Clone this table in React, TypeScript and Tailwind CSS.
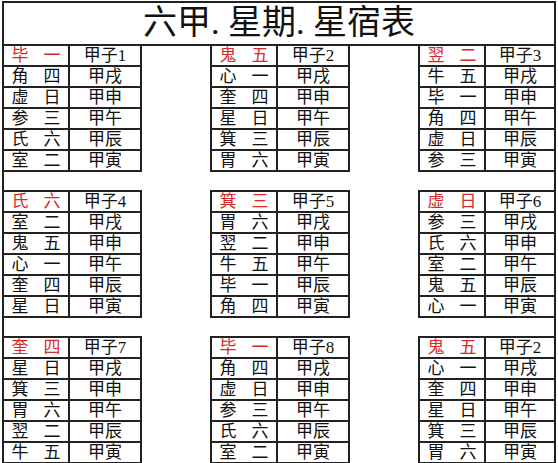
import React from "react";

type Row = [string, string, string];
type BlockData = { head: [string, string]; label: string; rows: [string, string][] };

const TAIL = ["甲戌", "甲申", "甲午", "甲辰", "甲寅"];

const blocks: BlockData[] = [
  { head: ["毕", "一"], label: "1", rows: [["角", "四"], ["虚", "日"], ["参", "三"], ["氏", "六"], ["室", "二"]] },
  { head: ["鬼", "五"], label: "2", rows: [["心", "一"], ["奎", "四"], ["星", "日"], ["箕", "三"], ["胃", "六"]] },
  { head: ["翌", "二"], label: "3", rows: [["牛", "五"], ["毕", "一"], ["角", "四"], ["虚", "日"], ["参", "三"]] },
  { head: ["氏", "六"], label: "4", rows: [["室", "二"], ["鬼", "五"], ["心", "一"], ["奎", "四"], ["星", "日"]] },
  { head: ["箕", "三"], label: "5", rows: [["胃", "六"], ["翌", "二"], ["牛", "五"], ["毕", "一"], ["角", "四"]] },
  { head: ["虚", "日"], label: "6", rows: [["参", "三"], ["氏", "六"], ["室", "二"], ["鬼", "五"], ["心", "一"]] },
  { head: ["奎", "四"], label: "7", rows: [["星", "日"], ["箕", "三"], ["胃", "六"], ["翌", "二"], ["牛", "五"]] },
  { head: ["毕", "一"], label: "8", rows: [["角", "四"], ["虚", "日"], ["参", "三"], ["氏", "六"], ["室", "二"]] },
  { head: ["鬼", "五"], label: "2", rows: [["心", "一"], ["奎", "四"], ["星", "日"], ["箕", "三"], ["胃", "六"]] },
];

function Line({ a, b, c, red }: { a: string; b: string; c: string; red?: boolean }) {
  return (
    <div className="flex h-[21px] border-b-2 border-[#222]">
      <div
        className={
          "grid grid-cols-2 w-[66px] shrink-0 border-r-2 border-[#222] leading-[19px] text-center " +
          (red ? "text-[#d8282a]" : "text-[#111]")
        }
      >
        <span>{a}</span>
        <span>{b}</span>
      </div>
      <div className="flex-1 leading-[19px] text-center text-[#111]">{c}</div>
    </div>
  );
}

function Block({ data, col, top }: { data: BlockData; col: number; top: boolean }) {
  const w = col === 0 ? "w-[138px] border-r-2" : col === 1 ? "w-[140px] border-x-2" : "w-[136px] border-l-2";
  return (
    <div className={"shrink-0 border-[#222] " + w + (top ? " border-t-2" : "")}>
      <Line a={data.head[0]} b={data.head[1]} c={"甲子" + data.label} red />
      {data.rows.map((r, i) => (
        <Line key={i} a={r[0]} b={r[1]} c={TAIL[i]} />
      ))}
    </div>
  );
}

export default function App() {
  return (
    <div
      className="w-[558px] h-[463px] bg-white overflow-hidden pl-[2px] pt-[1px] pr-[2px] text-[17px]"
      style={{ fontFamily: '"Liberation Serif", "Noto Sans CJK SC", serif' }}
    >
      <div className="h-[470px] border-2 border-b-0 border-[#222] flex flex-col">
        <div className="h-[43px] shrink-0 border-b-2 border-[#222] flex items-center justify-center text-[34px] leading-none text-[#111] pb-[1px]">
          六甲. 星期. 星宿表
        </div>
        {[0, 1, 2].map((r) => (
          <div key={r} className={"flex gap-[68px] " + (r > 0 ? "mt-[18px]" : "")}>
            {[0, 1, 2].map((c) => (
              <Block key={c} data={blocks[r * 3 + c]} col={c} top={r > 0} />
            ))}
          </div>
        ))}
      </div>
    </div>
  );
}
